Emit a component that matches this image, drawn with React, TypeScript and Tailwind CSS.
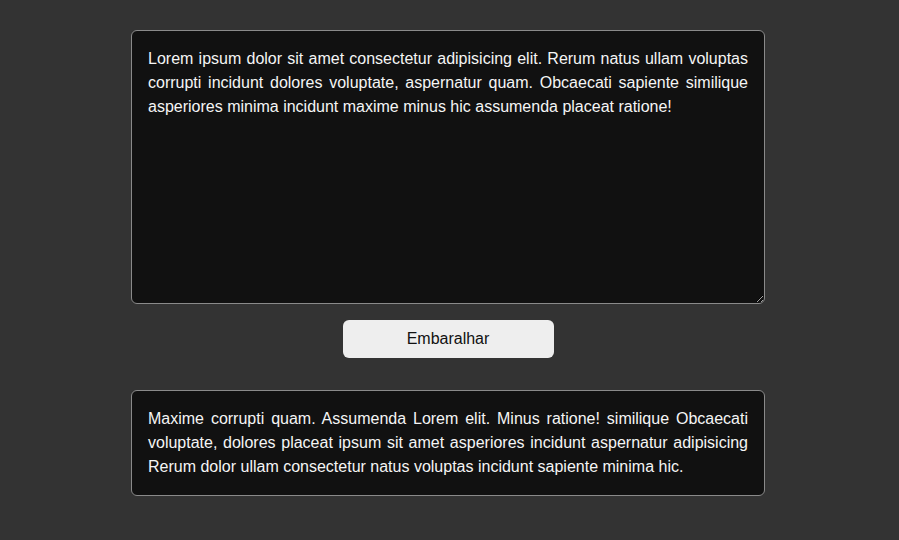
import { useState } from 'react';

const ORIGINAL =
  'Lorem ipsum dolor sit amet consectetur adipisicing elit. Rerum natus ullam voluptas corrupti incidunt dolores voluptate, aspernatur quam. Obcaecati sapiente similique asperiores minima incidunt maxime minus hic assumenda placeat ratione!';

const SHUFFLED =
  'Maxime corrupti quam. Assumenda Lorem elit. Minus ratione! similique Obcaecati voluptate, dolores placeat ipsum sit amet asperiores incidunt aspernatur adipisicing Rerum dolor ullam consectetur natus voluptas incidunt sapiente minima hic.';

export default function App() {
  const [text, setText] = useState(ORIGINAL);
  const [result, setResult] = useState(SHUFFLED);

  const shuffle = () => {
    const words = text.split(/\s+/).filter(Boolean);
    for (let i = words.length - 1; i > 0; i--) {
      const j = Math.floor(Math.random() * (i + 1));
      [words[i], words[j]] = [words[j], words[i]];
    }
    setResult(words.join(' '));
  };

  return (
    <div className="min-h-screen bg-[#333333] font-['Liberation_Sans',Arial,sans-serif] text-base">
      <div className="flex flex-col items-center pt-[30px] pr-[3px]">
        {/* Input */}
        <textarea
          value={text}
          onChange={(e) => setText(e.target.value)}
          className="block h-[274px] w-[634px] rounded-md border border-[#8a8a8a] bg-[#111111] p-4 text-justify leading-6 text-[#f5f5f5] outline-none"
        />

        {/* Button */}
        <button
          onClick={shuffle}
          className="mt-4 h-[38px] w-[211px] rounded-md bg-[#eeeeee] text-[#111111] leading-6"
        >
          Embaralhar
        </button>

        {/* Output */}
        <div className="mt-8 w-[634px] rounded-md border border-[#8a8a8a] bg-[#111111] p-4 text-justify leading-6 text-[#f5f5f5]">
          {result}
        </div>
      </div>
    </div>
  );
}
